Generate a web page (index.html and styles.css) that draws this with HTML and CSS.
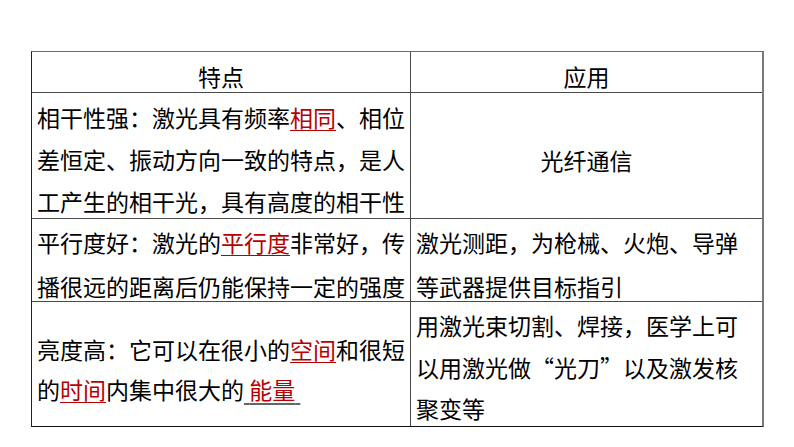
FILE: index.html
```html
<!DOCTYPE html>
<html lang="zh-CN">
<head>
<meta charset="utf-8">
<link rel="stylesheet" href="styles.css">
</head>
<body>
<div class="page">
  <div class="table">
    <div class="cell head">特点</div>
    <div class="cell head">应用</div>

    <div class="cell r1">相干性强：激光具有频率<span class="key">相同</span>、相位<br>差恒定、振动方向一致的特点，是人<br>工产生的相干光，具有高度的相干性</div>
    <div class="cell r1-app">光纤通信</div>

    <div class="cell r2">平行度好：激光的<span class="key">平行度</span>非常好，传<br>播很远的距离后仍能保持一定的强度</div>
    <div class="cell r2">激光测距，为枪械、火炮、导弹<br>等武器提供目标指引</div>

    <div class="cell r3">亮度高：它可以在很小的<span class="key">空间</span>和很短<br>的<span class="key">时间</span>内集中很大的<span class="blank">&nbsp;<span class="red">能量</span>&nbsp;</span></div>
    <div class="cell r3-app">用激光束切割、焊接，医学上可<br>以用激光做“光刀”以及激发核<br>聚变等</div>
  </div>
</div>
</body>
</html>
```

FILE: styles.css
```css
html, body {
  margin: 0;
  padding: 0;
  background: #ffffff;
}

body {
  font-family: "Noto Sans CJK SC", "Noto Sans", sans-serif;
  color: #000000;
}

.page {
  width: 794px;
  height: 447px;
  padding: 51px 0 0 31px;
  box-sizing: border-box;
}

.table {
  display: grid;
  grid-template-columns: 378px 351px;
  grid-template-rows: 40px 125px 82px 124px;
  gap: 1px;
  background: #4a4a4a;
  border-top: 1px solid #6a6a6a;
  border-left: 1px solid #222222;
  border-right: 2px solid #7a7a7a;
  border-bottom: 1px solid #111111;
  width: max-content;
}

.cell {
  background: #ffffff;
  font-size: 23px;
  white-space: nowrap;
  padding-left: 5px;
  box-sizing: border-box;
  overflow: visible;
}

.head {
  text-align: center;
  padding-left: 0;
  padding-top: 8px;
  line-height: 32px;
}

.r1 {
  padding-top: 3px;
  line-height: 42px;
}

.r1-app {
  text-align: center;
  padding-left: 0;
  padding-top: 46px;
  line-height: 42px;
}

.r2 {
  padding-top: 1px;
  line-height: 44px;
}

.r3 {
  padding-top: 27px;
  line-height: 40px;
}

.r3-app {
  padding-top: 3px;
  line-height: 41.7px;
}

.key {
  color: #b80000;
  text-decoration: underline;
  text-decoration-color: #b80000;
  text-decoration-thickness: 1px;
  text-underline-offset: 3px;
}

.blank {
  text-decoration: underline;
  text-decoration-color: #666666;
  text-decoration-thickness: 2px;
  text-underline-offset: 4px;
}

.red {
  color: #b80000;
}
```
